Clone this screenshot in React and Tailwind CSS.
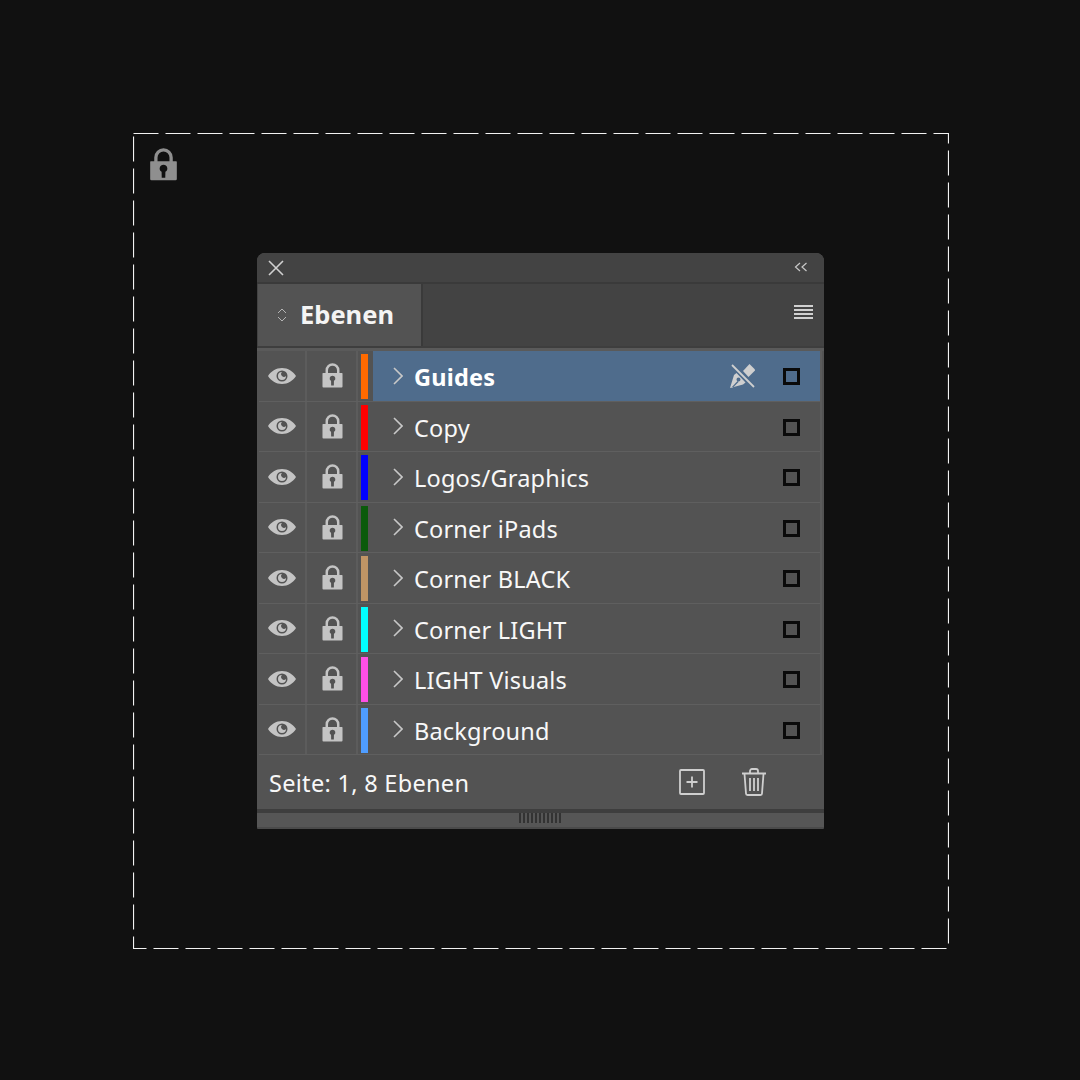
const layers = [
  { name: "Guides", color: "bg-[#ff6a00]", active: true },
  { name: "Copy", color: "bg-[#ff0000]" },
  { name: "Logos/Graphics", color: "bg-[#0000ff]" },
  { name: "Corner iPads", color: "bg-[#0b5a0b]" },
  { name: "Corner BLACK", color: "bg-[#c09565]" },
  { name: "Corner LIGHT", color: "bg-[#00ffff]" },
  { name: "LIGHT Visuals", color: "bg-[#ff4fe6]" },
  { name: "Background", color: "bg-[#4f9dff]" },
];

function Lock({ className }) {
  return (
    <svg viewBox="0 0 22 26" className={className} fill="none">
      <path d="M5 12V7.500a6 6 0 0 1 12 0V12" stroke="currentColor" strokeWidth="2.600" />
      <path fillRule="evenodd" fill="currentColor" d="M1 10.500h20a.5.5 0 0 1 .5.5v13.500a1 1 0 0 1-1 1h-19a1 1 0 0 1-1-1V11a.5.5 0 0 1 .5-.5ZM11 13.200a3 3 0 0 0-1.500 5.600L9.600 23.500h2.800l.1-4.700A3 3 0 0 0 11 13.200Z" />
    </svg>
  );
}

function Eye() {
  return (
    <svg viewBox="0 0 28 16" className="w-[28px] h-[16px] text-[#c4c4c4]">
      <path fillRule="evenodd" fill="currentColor" d="M14 0C8 0 3 3.5 0 8c3 4.500 8 8 14 8s11-3.500 14-8c-3-4.500-8-8-14-8Zm0 2.500a5.500 5.500 0 1 1 0 11 5.500 5.500 0 0 1 0-11Z" />
      <path fillRule="evenodd" fill="currentColor" d="M14 4a4 4 0 1 0 4 4 2.500 2.500 0 0 1-4-4Z" />
    </svg>
  );
}

function PenOff() {
  return (
    <svg viewBox="0 0 25 24" className="w-[25px] h-[24px] text-[#cfcfcf]">
      <path fill="currentColor" d="M13 7 19.500 0 25.500 6 18.500 13Z" />
      <path fillRule="evenodd" fill="currentColor" d="M0 24 4 11 6.500 9 15.500 18.500 13 20.500ZM8.500 13.500a2 2 0 1 0 0 4 2 2 0 0 0 0-4ZM1.500 23.500 7.500 17 8.500 18 2.500 24Z" />
      <path d="M1.500 0.500 24 23" stroke="#4f6c8c" strokeWidth="4" />
      <path d="M2 1 24 23" stroke="currentColor" strokeWidth="1.800" />
    </svg>
  );
}

function Row({ layer }) {
  return (
    <div className="flex h-[50.500px] border-b border-[#5f5f5f]">
      <div className="w-[48px] flex items-center justify-center border-r-2 border-[#5c5c5c]">
        <Eye />
      </div>
      <div className="w-[51px] flex items-center justify-center pl-[2px] border-r-2 border-[#5c5c5c] text-[#c4c4c4]">
        <Lock className="w-[21px] h-[25px]" />
      </div>
      <div className="w-[15px] shrink-0 pl-[3px] pt-[3px] pr-[5px]">
        <div className={`w-[7px] h-[45px] ${layer.color}`} />
      </div>
      <div className={`flex-1 flex items-center relative ${layer.active ? "bg-[#4f6c8c]" : ""}`}>
        <svg viewBox="0 0 10 18" className="w-[10px] h-[18px] ml-[20px] text-[#c8c8c8]" fill="none">
          <path d="M1 1l8 8-8 8" stroke="currentColor" strokeWidth="1.600" />
        </svg>
        <span className={`ml-[11px] mt-[4px] text-[23.500px] leading-none text-[#f8f8f8] tracking-[0.2px] ${layer.active ? "font-bold text-white" : ""}`}>
          {layer.name}
        </span>
        {layer.active && (
          <span className="absolute left-[357px] top-[13px]">
            <PenOff />
          </span>
        )}
        <span className="absolute left-[410px] top-[17px] w-[17px] h-[17px] border-[3px] border-[#0a0a0a]" />
      </div>
    </div>
  );
}

export default function App() {
  return (
    <div className="w-[1080px] h-[1080px] bg-[#111111] flex items-center justify-center font-['Noto_Sans',sans-serif] pl-[2px] pt-[2px]">
      <div className="relative w-[816px] h-[816px] flex items-center justify-center">
        <svg className="absolute inset-0 w-[816px] h-[816px]" viewBox="0 0 816 816" fill="none">
          <rect x="0.500" y="0.500" width="815" height="815" stroke="#f2f2f2" strokeWidth="1.200" strokeDasharray="25 7" />
        </svg>
        <Lock className="absolute left-[16px] top-[15px] w-[29px] h-[33px] text-[#8f8f8f]" />

        <div className="w-[567px] h-[576px] mr-[1px] rounded-t-[8px] rounded-b-[2px] bg-[#535353] flex flex-col overflow-hidden">
          <div className="h-[31px] shrink-0 bg-[#434343] border-b-2 border-[#3a3a3a] flex items-center justify-between pl-[11px] pr-[16px]">
            <svg viewBox="0 0 16 16" className="w-[16px] h-[16px] text-[#d0d0d0]" fill="none">
              <path d="M1 1l14 14M15 1L1 15" stroke="currentColor" strokeWidth="1.600" />
            </svg>
            <svg viewBox="0 0 14 10" className="w-[14px] h-[10px] text-[#c8c8c8] mb-[1px]" fill="none">
              <path d="M6 1L1.500 5 6 9M12.500 1L8 5l4.500 4" stroke="currentColor" strokeWidth="1.200" />
            </svg>
          </div>
          <div className="h-[62px] shrink-0 bg-[#434343] flex items-stretch justify-between pl-[1px] pr-[11px]">
            <div className="w-[165px] bg-[#535353] border-r-2 border-[#3a3a3a] flex items-center pl-[19px]">
              <svg viewBox="0 0 10 16" className="w-[10px] h-[16px] text-[#b5b5b5]" fill="none">
                <path d="M1 6l4-4 4 4M1 10l4 4 4-4" stroke="currentColor" strokeWidth="1" />
              </svg>
              <span className="ml-[13px] text-[25.500px] font-bold leading-none text-[#f4f4f4]">Ebenen</span>
            </div>
            <div className="flex flex-col justify-center gap-[2px] pb-[6px]">
              <div className="w-[19px] h-[2px] bg-[#d0d0d0]" />
              <div className="w-[19px] h-[2px] bg-[#d0d0d0]" />
              <div className="w-[19px] h-[2px] bg-[#d0d0d0]" />
              <div className="w-[19px] h-[2px] bg-[#d0d0d0]" />
            </div>
          </div>
          <div className="h-[5px] shrink-0 bg-[#5a5a5a] border-t-2 border-[#3e3e3e]" />
          <div className="mx-[2px] border-r-2 border-[#5c5c5c]">
            {layers.map((l) => (
              <Row key={l.name} layer={l} />
            ))}
          </div>
          <div className="h-[54px] shrink-0 flex items-center relative pl-[12px]">
            <span className="mt-[4px] text-[23.500px] leading-none text-[#f8f8f8] tracking-[0.3px]">Seite: 1, 8 Ebenen</span>
            <svg viewBox="0 0 26 26" className="absolute left-[422px] top-[14px] w-[26px] h-[26px] text-[#cfcfcf]" fill="none">
              <rect x="1" y="1" width="24" height="24" rx="1" stroke="currentColor" strokeWidth="1.800" />
              <path d="M13 7.500v11M7.500 13h11" stroke="currentColor" strokeWidth="1.800" />
            </svg>
            <svg viewBox="0 0 26 28" className="absolute left-[484px] top-[13px] w-[26px] h-[28px] text-[#cfcfcf]" fill="none">
              <path d="M1 5.500h24M9 5V3a2 2 0 0 1 2-2h4a2 2 0 0 1 2 2v2" stroke="currentColor" strokeWidth="1.800" />
              <path d="M3.500 6l1.500 19.500a1.500 1.500 0 0 0 1.500 1.500h13a1.500 1.500 0 0 0 1.500-1.500L22.500 6" stroke="currentColor" strokeWidth="1.800" />
              <path d="M9 10v13M13 10v13M17 10v13" stroke="currentColor" strokeWidth="1.800" />
            </svg>
          </div>
          <div className="h-[4px] shrink-0 bg-[#3e3e3e]" />
          <div className="flex-1 bg-[#565656] border-b-2 border-[#4a4a4a] flex items-center justify-center">
            <div className="flex gap-[2px] mb-[4px] mr-[2px]">
              {Array.from({ length: 11 }).map((_, i) => (
                <div key={i} className="w-[2px] h-[10px] bg-[#333333]" />
              ))}
            </div>
          </div>
        </div>
      </div>
    </div>
  );
}
